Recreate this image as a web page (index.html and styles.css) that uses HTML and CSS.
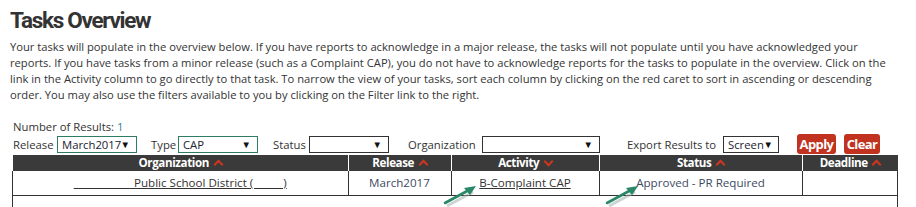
FILE: index.html
```html
<!DOCTYPE html>
<html>
<head>
<meta charset="utf-8">
<link rel="stylesheet" href="styles.css">
</head>
<body>
<div class="page">
  <h1 class="title">Tasks Overview</h1>
  <p class="intro">Your tasks will populate in the overview below. If you have reports to acknowledge in a major release, the tasks will not populate until you have acknowledged your reports. If you have tasks from a minor release (such as a Complaint CAP), you do not have to acknowledge reports for the tasks to populate in the overview. Click on the link in the Activity column to go directly to that task. To narrow the view of your tasks, sort each column by clicking on the red caret to sort in ascending or descending order. You may also use the filters available to you by clicking on the Filter link to the right.</p>
  <div class="results">Number of Results: <span class="count">1</span></div>
  <div class="filters">
    <label class="flabel l-rel">Release</label>
    <span class="sel sel-green w80">March2017<span class="arr">▼</span></span>
    <label class="flabel l-type">Type</label>
    <span class="sel sel-green w80">CAP<span class="arr">▼</span></span>
    <label class="flabel l-status">Status</label>
    <span class="sel w80"><span class="arr">▼</span></span>
    <label class="flabel l-org">Organization</label>
    <span class="sel w118"><span class="arr">▼</span></span>
    <label class="flabel l-export">Export Results to</label>
    <span class="sel w56">Screen<span class="arr">▼</span></span>
    <button class="btn b-apply">Apply</button>
    <button class="btn b-clear">Clear</button>
  </div>
  <div class="tablewrap">
    <table class="tasks">
      <thead>
        <tr>
          <th class="c-org">Organization <span class="caret up"></span></th>
          <th class="c-rel">Release <span class="caret up"></span></th>
          <th class="c-act">Activity <span class="caret down"></span></th>
          <th class="c-stat">Status <span class="caret up"></span></th>
          <th class="c-dead">Deadline <span class="caret up"></span></th>
        </tr>
      </thead>
      <tbody>
        <tr class="row1">
          <td class="c-org"><a class="org-link" href="#">&nbsp;&nbsp;&nbsp;&nbsp;&nbsp;&nbsp;&nbsp;&nbsp;&nbsp;&nbsp;&nbsp;&nbsp;&nbsp;&nbsp;&nbsp;&nbsp;&nbsp;&nbsp;&nbsp;&nbsp;Public School District (&nbsp;&nbsp;&nbsp;&nbsp;&nbsp;&nbsp;&nbsp;&nbsp;&nbsp;&nbsp;)</a></td>
          <td class="c-rel rel-text">March2017</td>
          <td class="c-act"><a class="act-link" href="#">B-Complaint CAP</a></td>
          <td class="c-stat stat-text">Approved - PR Required</td>
          <td class="c-dead"></td>
        </tr>
        <tr class="row2">
          <td colspan="5"></td>
        </tr>
      </tbody>
    </table>
    <svg class="arrow a1" width="40" height="26" viewBox="0 0 40 26">
      <line x1="4" y1="21" x2="30" y2="7" stroke="#9aa" stroke-opacity="0.5" stroke-width="3" transform="translate(1,2)"/>
      <line x1="3" y1="20" x2="27" y2="7" stroke="#2a8768" stroke-width="2.6" stroke-linecap="round"/>
      <polygon points="34,3 22,5 28,12" fill="#2a8768"/>
    </svg>
    <svg class="arrow a2" width="40" height="26" viewBox="0 0 40 26">
      <line x1="4" y1="21" x2="30" y2="7" stroke="#9aa" stroke-opacity="0.5" stroke-width="3" transform="translate(1,2)"/>
      <line x1="3" y1="20" x2="27" y2="7" stroke="#2a8768" stroke-width="2.6" stroke-linecap="round"/>
      <polygon points="34,3 22,5 28,12" fill="#2a8768"/>
    </svg>
  </div>
</div>
</body>
</html>
```
FILE: styles.css
```css
html, body {
  margin: 0;
  padding: 0;
  background: #fff;
}
body {
  font-family: "Open Sans", "Liberation Sans", sans-serif;
  color: #333;
  font-size: 11.6px;
  overflow: hidden;
}
.page {
  padding: 6px 10px 0 10px;
  width: 896px;
}
.title {
  margin: 0;
  font-family: Roboto, "Open Sans", sans-serif;
  font-size: 22.5px;
  line-height: 28px;
  font-weight: 700;
  letter-spacing: -1.3px;
  color: #333;
}
.intro {
  margin: 5px 0 0 0;
  font-size: 11.2px;
  line-height: 16px;
  color: #333;
  width: 885px;
}
.results {
  margin-top: 16px;
  margin-left: 3px;
  line-height: 15px;
  font-size: 11.3px;
}
.count { color: #3a7ca5; }
.filters {
  display: flex;
  align-items: center;
  margin-left: 3px;
  height: 20px;
  font-size: 11.3px;
}
.flabel { flex: none; white-space: nowrap; }
.l-rel { width: 44px; }
.l-type { margin-left: 14px; width: 27px; }
.l-status { margin-left: 15px; width: 36px; }
.l-org { margin-left: 19px; width: 74px; }
.l-export { margin-left: 27px; width: 96px; }
.sel {
  flex: none;
  position: relative;
  box-sizing: border-box;
  height: 17px;
  border: 1px solid #333;
  line-height: 15px;
  padding-left: 4px;
  color: #223;
  font-size: 11.3px;
  white-space: nowrap;
  overflow: hidden;
}
.sel-green { border-color: #2e7d62; }
.w80 { width: 80px; }
.w118 { width: 118px; }
.w56 { width: 56px; }
.arr {
  position: absolute;
  right: 6px;
  top: 0;
  font-size: 9.5px;
  color: #111;
}
.w56 .arr { right: 5px; }
.btn {
  flex: none;
  border: none;
  background: #c1321f;
  color: #fff;
  font-family: "Open Sans", "Liberation Sans", sans-serif;
  font-weight: 700;
  font-size: 13px;
  letter-spacing: -0.6px;
  height: 20px;
  border-radius: 3px;
  padding: 0;
  line-height: 20px;
}
.b-apply { margin-left: 18px; width: 39px; }
.b-clear { margin-left: 8px; width: 36px; }
.tablewrap {
  position: relative;
  margin-top: 1px;
  margin-left: 2px;
}
.tasks {
  border-collapse: collapse;
  width: 886px;
  table-layout: fixed;
}
.tasks th {
  background: #3a3a3a;
  color: #fff;
  font-weight: 700;
  font-size: 11.6px;
  letter-spacing: -0.4px;
  height: 16px;
  padding: 0;
  line-height: 16px;
  border-left: 1px solid #fff;
  text-align: center;
}
.tasks th:first-child { border-left: none; }
.c-org { width: 335px; }
.c-rel { width: 102px; }
.c-act { width: 147px; }
.c-stat { width: 202px; }
.c-dead { width: auto; }
.caret {
  display: inline-block;
  width: 5px;
  height: 5px;
  border-left: 2px solid #d0351f;
  border-top: 2px solid #d0351f;
  margin-left: 3px;
}
.caret.up { transform: rotate(45deg); vertical-align: -1px; }
.caret.down { transform: rotate(225deg); vertical-align: 2px; }
.tasks td {
  padding: 0;
  height: 24px;
  border: 1px solid #333;
  border-top: none;
  text-align: center;
  line-height: 24px;
  font-size: 11.6px;
}
.row2 td {
  height: 14px;
  border-bottom: none;
}
.org-link {
  color: #333;
  text-decoration: underline;
}
.rel-text { color: #3d4a63; }
.act-link { color: #333; }
.stat-text { color: #3d4a63; }
.arrow { position: absolute; }
.a1 { left: 430px; top: 28px; }
.a2 { left: 592px; top: 28px; }
```
